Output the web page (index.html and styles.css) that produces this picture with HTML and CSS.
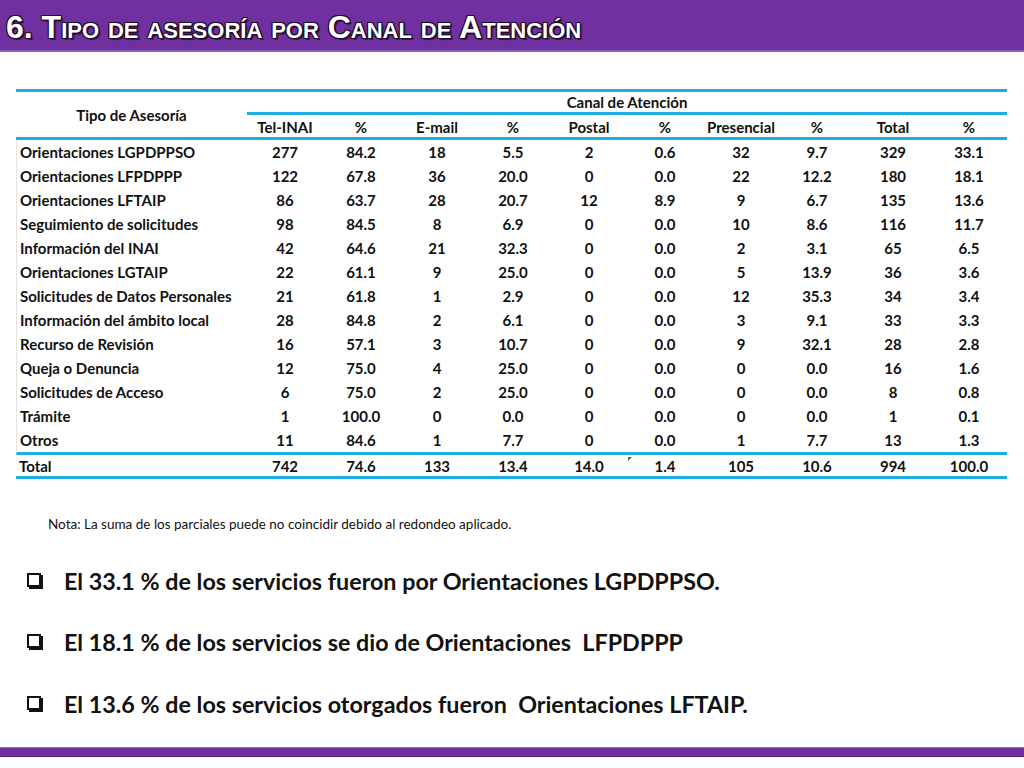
FILE: index.html
```html
<!DOCTYPE html>
<html lang="es">
<head>
<meta charset="utf-8">
<title>Tipo de asesoría por Canal de Atención</title>
<link rel="stylesheet" href="styles.css">
</head>
<body>
<header class="titlebar">
  <h1 class="title">6. Tipo de asesoría por Canal de Atención</h1>
</header>

<main class="content">
  <div class="grid">
    <div class="c hd tipo">Tipo de Asesoría</div>
    <div class="c hd canal">Canal de Atención</div>
    <div class="c hd sub">Tel-INAI</div>
    <div class="c hd sub">%</div>
    <div class="c hd sub">E-mail</div>
    <div class="c hd sub">%</div>
    <div class="c hd sub">Postal</div>
    <div class="c hd sub">%</div>
    <div class="c hd sub">Presencial</div>
    <div class="c hd sub">%</div>
    <div class="c hd sub">Total</div>
    <div class="c hd sub">%</div>

    <div class="c name">Orientaciones LGPDPPSO</div><div class="c">277</div><div class="c">84.2</div><div class="c">18</div><div class="c">5.5</div><div class="c">2</div><div class="c">0.6</div><div class="c">32</div><div class="c">9.7</div><div class="c">329</div><div class="c">33.1</div>
    <div class="c name">Orientaciones LFPDPPP</div><div class="c">122</div><div class="c">67.8</div><div class="c">36</div><div class="c">20.0</div><div class="c">0</div><div class="c">0.0</div><div class="c">22</div><div class="c">12.2</div><div class="c">180</div><div class="c">18.1</div>
    <div class="c name">Orientaciones LFTAIP</div><div class="c">86</div><div class="c">63.7</div><div class="c">28</div><div class="c">20.7</div><div class="c">12</div><div class="c">8.9</div><div class="c">9</div><div class="c">6.7</div><div class="c">135</div><div class="c">13.6</div>
    <div class="c name">Seguimiento de solicitudes</div><div class="c">98</div><div class="c">84.5</div><div class="c">8</div><div class="c">6.9</div><div class="c">0</div><div class="c">0.0</div><div class="c">10</div><div class="c">8.6</div><div class="c">116</div><div class="c">11.7</div>
    <div class="c name">Información del INAI</div><div class="c">42</div><div class="c">64.6</div><div class="c">21</div><div class="c">32.3</div><div class="c">0</div><div class="c">0.0</div><div class="c">2</div><div class="c">3.1</div><div class="c">65</div><div class="c">6.5</div>
    <div class="c name">Orientaciones LGTAIP</div><div class="c">22</div><div class="c">61.1</div><div class="c">9</div><div class="c">25.0</div><div class="c">0</div><div class="c">0.0</div><div class="c">5</div><div class="c">13.9</div><div class="c">36</div><div class="c">3.6</div>
    <div class="c name">Solicitudes de Datos Personales</div><div class="c">21</div><div class="c">61.8</div><div class="c">1</div><div class="c">2.9</div><div class="c">0</div><div class="c">0.0</div><div class="c">12</div><div class="c">35.3</div><div class="c">34</div><div class="c">3.4</div>
    <div class="c name">Información del ámbito local</div><div class="c">28</div><div class="c">84.8</div><div class="c">2</div><div class="c">6.1</div><div class="c">0</div><div class="c">0.0</div><div class="c">3</div><div class="c">9.1</div><div class="c">33</div><div class="c">3.3</div>
    <div class="c name">Recurso de Revisión</div><div class="c">16</div><div class="c">57.1</div><div class="c">3</div><div class="c">10.7</div><div class="c">0</div><div class="c">0.0</div><div class="c">9</div><div class="c">32.1</div><div class="c">28</div><div class="c">2.8</div>
    <div class="c name">Queja o Denuncia</div><div class="c">12</div><div class="c">75.0</div><div class="c">4</div><div class="c">25.0</div><div class="c">0</div><div class="c">0.0</div><div class="c">0</div><div class="c">0.0</div><div class="c">16</div><div class="c">1.6</div>
    <div class="c name">Solicitudes de Acceso</div><div class="c">6</div><div class="c">75.0</div><div class="c">2</div><div class="c">25.0</div><div class="c">0</div><div class="c">0.0</div><div class="c">0</div><div class="c">0.0</div><div class="c">8</div><div class="c">0.8</div>
    <div class="c name">Trámite</div><div class="c">1</div><div class="c">100.0</div><div class="c">0</div><div class="c">0.0</div><div class="c">0</div><div class="c">0.0</div><div class="c">0</div><div class="c">0.0</div><div class="c">1</div><div class="c">0.1</div>
    <div class="c name last">Otros</div><div class="c last">11</div><div class="c last">84.6</div><div class="c last">1</div><div class="c last">7.7</div><div class="c last">0</div><div class="c last">0.0</div><div class="c last">1</div><div class="c last">7.7</div><div class="c last">13</div><div class="c last">1.3</div>
    <div class="c name tot">Total</div><div class="c tot">742</div><div class="c tot">74.6</div><div class="c tot">133</div><div class="c tot">13.4</div><div class="c tot">14.0</div><div class="c tot flag">1.4<span class="err"></span></div><div class="c tot">105</div><div class="c tot">10.6</div><div class="c tot">994</div><div class="c tot">100.0</div>
  </div>

  <p class="note">Nota: La suma de los parciales puede no coincidir debido al redondeo aplicado.</p>

  <ul class="bullets">
    <li><span class="box" aria-hidden="true"></span><span>El 33.1 % de los servicios fueron por Orientaciones LGPDPPSO.</span></li>
    <li><span class="box" aria-hidden="true"></span><span>El 18.1 % de los servicios se dio de Orientaciones&nbsp; LFPDPPP</span></li>
    <li><span class="box" aria-hidden="true"></span><span>El 13.6 % de los servicios otorgados fueron&nbsp; Orientaciones LFTAIP.</span></li>
  </ul>
</main>

<footer class="footbar"></footer>
</body>
</html>
```

FILE: styles.css
```css
* { box-sizing: border-box; }

html, body {
  margin: 0;
  padding: 0;
  background: #ffffff;
  width: 1024px;
  height: 768px;
  overflow: hidden;
}

body {
  font-family: Lato, "Open Sans", sans-serif;
  color: #111111;
}

.titlebar {
  height: 52px;
  background: #7030a0;
  border-bottom: 2px solid #8e5cbc;
  display: flex;
  align-items: center;
  padding-left: 6px;
}

.title {
  margin: 0;
  font-family: "Liberation Sans", Arial, sans-serif;
  font-weight: bold;
  font-size: 32px;
  font-variant: small-caps;
  color: #ffffff;
  letter-spacing: 0;
  line-height: 1;
  padding-top: 3px;
  text-shadow:
    1px 0 0 #1e0b2e, -1px 0 0 #1e0b2e, 0 1px 0 #1e0b2e, 0 -1px 0 #1e0b2e,
    1px 1px 0 #1e0b2e, -1px -1px 0 #1e0b2e, 1px -1px 0 #1e0b2e, -1px 1px 0 #1e0b2e,
    2px 2px 1px rgba(0, 0, 0, 0.6);
}

.content {
  padding: 37px 17px 0 16px;
}

.grid {
  display: grid;
  grid-template-columns: 231px repeat(10, 76px);
  border-top: 3px solid #1eaee6;
  font-weight: bold;
  font-size: 15px;
}

.c {
  height: 24px;
  display: flex;
  align-items: center;
  justify-content: center;
  white-space: nowrap;
}

.hd { font-weight: bold; }

.tipo {
  grid-row: 1 / span 2;
  grid-column: 1;
  height: auto;
  border-bottom: 3px solid #1eaee6;
}

.canal {
  grid-column: 2 / span 10;
  height: 23px;
  border-bottom: 3px solid #1eaee6;
}

.sub {
  height: 25px;
  border-bottom: 3px solid #1eaee6;
  padding-top: 1px;
}

.name {
  justify-content: flex-start;
  padding-left: 3px;
  border-left: 1px solid #e4e4e4;
}

.last {
  height: 27px;
  border-bottom: 3px solid #1eaee6;
}

.tot {
  height: 24px;
  border-bottom: 3px solid #1eaee6;
  border-left: none;
}

.flag { position: relative; }

.err {
  position: absolute;
  left: 1px;
  top: 2px;
  width: 0;
  height: 0;
  border-top: 4px solid #1a8a3a;
  border-right: 4px solid transparent;
}

.note {
  margin: 37px 0 0 32px;
  font-size: 13.5px;
  font-weight: normal;
}

.bullets {
  list-style: none;
  margin: 18px 0 0 0;
  padding: 0 0 0 11px;
}

.bullets li {
  display: flex;
  align-items: center;
  height: 61.5px;
  font-size: 23.3px;
  font-weight: bold;
}

.box {
  flex: none;
  width: 14px;
  height: 14px;
  border: 2px solid #111111;
  box-shadow: 2px 2px 0 #111111;
  margin-right: 23px;
  position: relative;
  top: -1px;
}

.footbar {
  position: absolute;
  left: 0;
  top: 747px;
  width: 1024px;
  height: 10px;
  background: #7030a0;
  border-top: 1px solid #9a6cc6;
  border-bottom: 1px solid #5a2288;
}
```
